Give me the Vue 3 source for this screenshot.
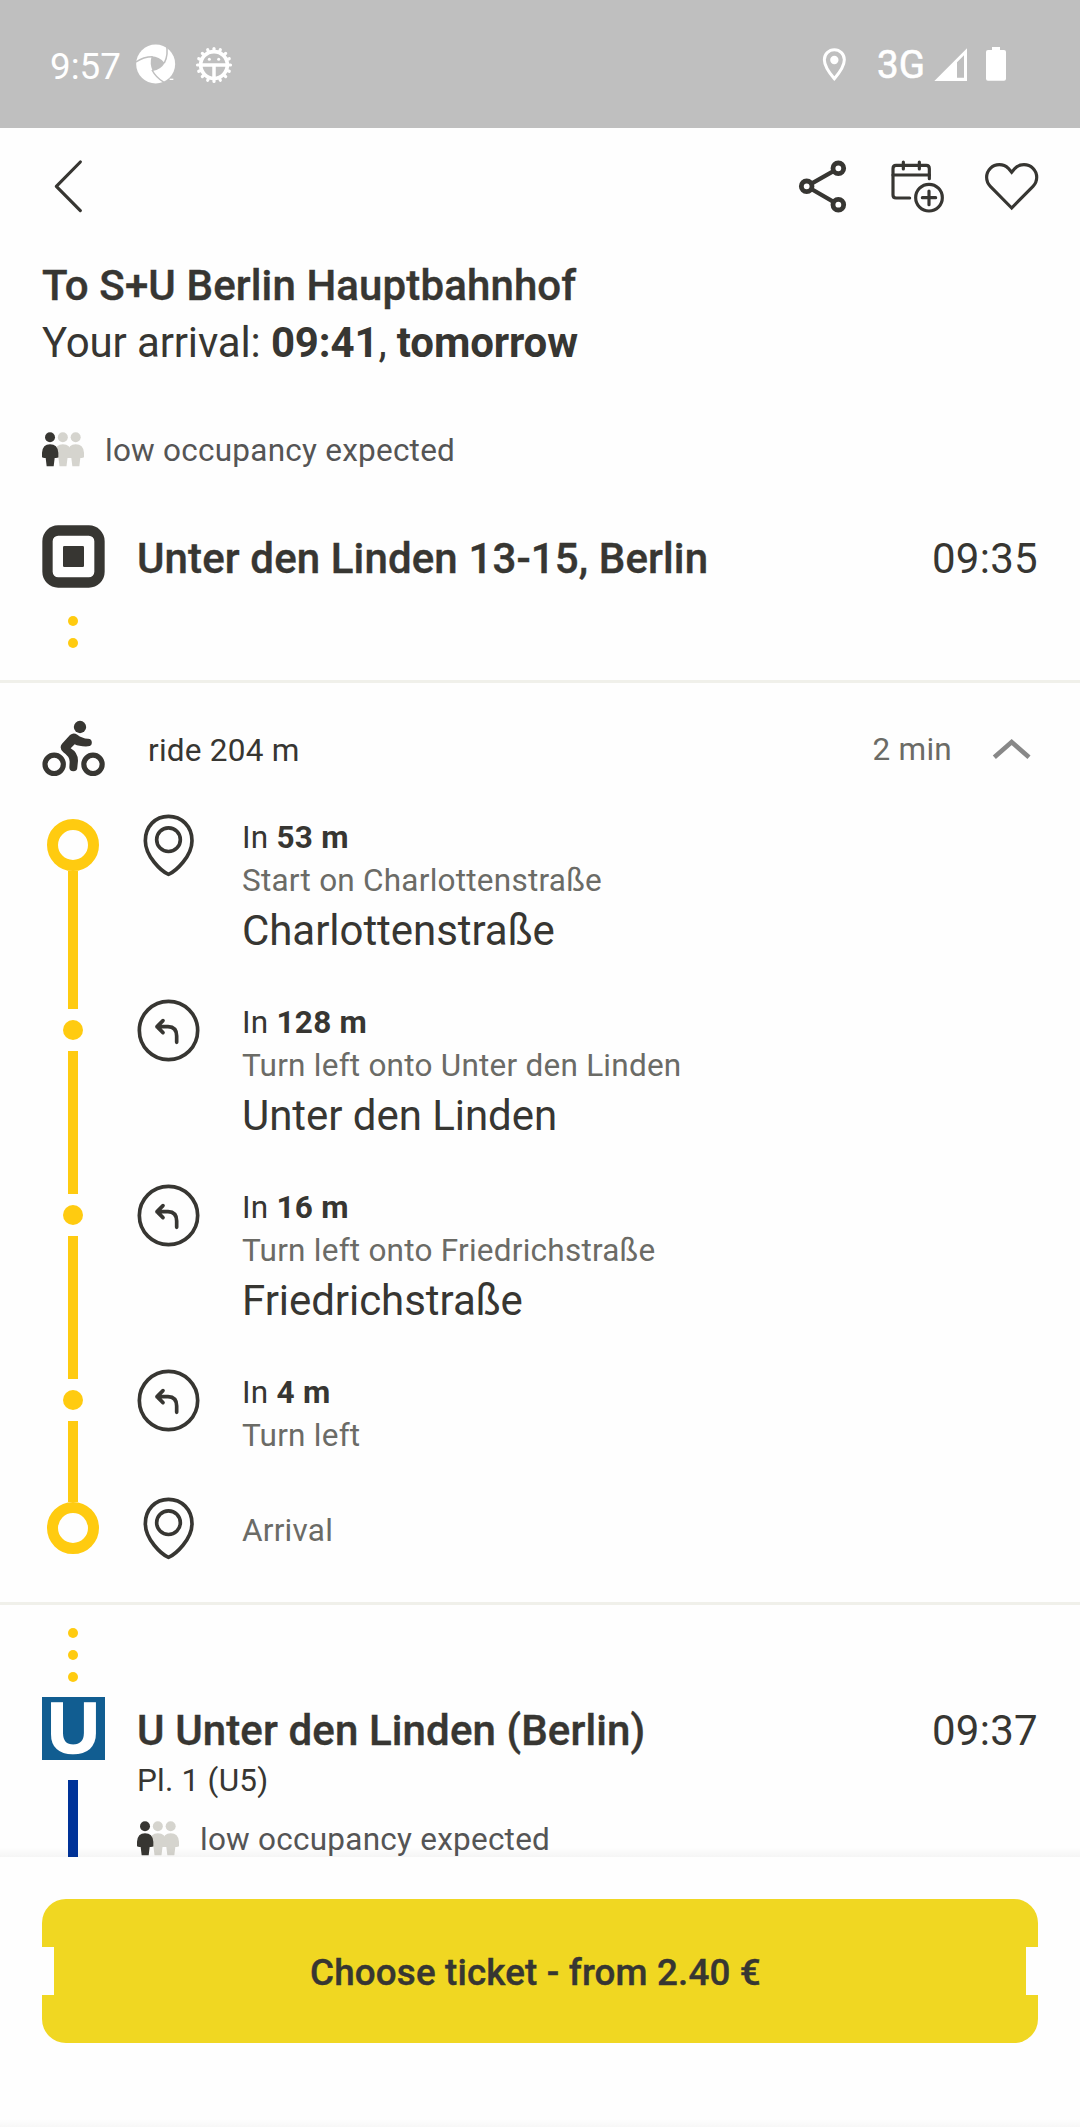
<script setup>
import { h } from 'vue'

const steps = [
  { kind: 'start', distance: '53 m', hint: 'Start on Charlottenstraße', street: 'Charlottenstraße' },
  { kind: 'turn', distance: '128 m', hint: 'Turn left onto Unter den Linden', street: 'Unter den Linden' },
  { kind: 'turn', distance: '16 m', hint: 'Turn left onto Friedrichstraße', street: 'Friedrichstraße' },
  { kind: 'turn last', distance: '4 m', hint: 'Turn left' },
  { kind: 'end', hint: 'Arrival' },
]

const teeth = Array.from({ length: 16 }, (_, i) => i * 22.5)

// Three standing figures, the first one highlighted for low occupancy
const figure = (x, fill) =>
  h('g', { fill, transform: `translate(${x} 0)` }, [
    h('circle', { cx: 24, cy: 16, r: 15 }),
    h('path', { d: 'M0 76V62Q2 37 24 37Q47 37 49 62V76Q45 79 38 78L35 103H14L11 78Q4 79 0 76Z' }),
  ])
const Occupancy = () =>
  h('svg', { viewBox: '0 0 126 104', width: 42, height: 34.67 }, [
    figure(77, '#d5d4ce'),
    figure(38.5, '#d5d4ce'),
    figure(0, '#373632'),
  ])
</script>

<template>
  <div class="screen">
    <header class="status">
      <span class="clock">9:57</span>
      <svg class="aperture" viewBox="405 133 126 126" width="42" height="42">
        <circle cx="467" cy="196" r="58.5" fill="#fff" />
        <g fill="none" stroke="#bfbfbf" stroke-width="4.5">
          <path d="M493 193Q506 168 499 137" />
          <path d="M458 174Q430 174 408 190" />
          <path d="M456 214Q468 237 492 251" />
        </g>
        <path d="M455 173Q477 173 494 193Q483 213 458 217Q448 196 455 173Z" fill="#bfbfbf" />
        <path d="M509 242h11" stroke="#fff" stroke-width="4" />
      </svg>
      <svg class="gear" viewBox="582 135 120 120" width="40" height="40">
        <g stroke="#fff" stroke-width="9.5" stroke-linecap="round">
          <path v-for="a in teeth" :key="a" d="M642 153V145.500" :transform="`rotate(${a} 642 195)`" />
        </g>
        <circle cx="642" cy="195" r="40" fill="none" stroke="#fff" stroke-width="11" />
        <path d="M602 195H682M642 195V235" stroke="#fff" stroke-width="10.500" />
        <circle cx="628" cy="178" r="4.500" fill="#fff" />
        <circle cx="656" cy="178" r="4.500" fill="#fff" />
      </svg>
      <svg class="gps" viewBox="186 140 75 105" width="25" height="35">
        <path d="M223 235Q193 200 193 178A30 30 0 0 1 253 178Q253 200 223 235Z" fill="none" stroke="#fff" stroke-width="9" />
        <circle cx="223" cy="179" r="12.5" fill="#fff" />
      </svg>
      <span class="net">3G</span>
      <svg class="signal" viewBox="522 141 99 99" width="33" height="33">
        <path d="M523 240L621 142V240ZM591 184V230H612V163Z" fill="#fff" fill-rule="evenodd" />
      </svg>
      <svg class="battery" viewBox="678 141 60 102" width="20" height="34">
        <path d="M696 141H720V150H732Q738 150 738 156V236Q738 242 732 242H684Q678 242 678 236V156Q678 150 684 150H696Z" fill="#fff" />
      </svg>
    </header>

    <nav class="toolbar">
      <svg class="back" viewBox="156 474 96 171" width="32" height="57">
        <path d="M241 486L169 559L241 632" />
      </svg>
      <svg class="share" viewBox="114 474 150 171" width="50" height="57">
        <path d="M235 505L140 559L235 614" stroke-width="12.5" />
        <g fill="#fff" stroke-width="14.5">
          <circle cx="235" cy="505" r="16" />
          <circle cx="140" cy="559" r="16" />
          <circle cx="235" cy="614" r="16" />
        </g>
      </svg>
      <svg class="calendar" viewBox="390 474 165 171" width="55" height="57">
        <path d="M449 594H408Q399 594 399 585V506Q399 496 408 496H499Q508 496 508 506V536" />
        <path d="M399 525H508M430 486V507M478 486V507" />
        <circle cx="507" cy="593" r="40" />
        <path d="M487 593H527M507 573V614" />
      </svg>
      <svg class="heart" viewBox="672 474 165 171" width="55" height="57">
        <path d="M755 624L691 559A38 38 0 0 1 745 505L755 517L765 505A38 38 0 0 1 819 559Z" />
      </svg>
    </nav>

    <main class="content">
      <section class="summary">
        <p class="line medium">To S+U Berlin Hauptbahnhof</p>
        <p class="line arrival">Your arrival: <b>09:41</b>, <b>tomorrow</b></p>
        <div class="occupancy"><Occupancy /><span>low occupancy expected</span></div>
      </section>

      <section class="origin">
        <div class="stop">
          <svg class="place" viewBox="126 135 189 189" width="63" height="63">
            <rect x="142.500" y="151.500" width="156" height="156" rx="32" fill="none" stroke="#373632" stroke-width="31" />
            <rect x="189" y="198" width="63" height="63" rx="4" fill="#373632" />
          </svg>
          <h2 class="medium">Unter den Linden 13-15, Berlin</h2>
          <time>09:35</time>
        </div>
        <div class="dots"><i></i><i></i></div>
      </section>

      <section class="leg">
        <div class="leg-head">
          <svg class="bike" viewBox="126 720 189 171" width="63" height="57">
            <g fill="none" stroke="#373632" stroke-width="15.500">
              <circle cx="162.500" cy="853" r="27.500" />
              <circle cx="279" cy="853" r="27.500" />
            </g>
            <g fill="#373632">
              <circle cx="240" cy="741" r="18.500" />
              <path d="M210 765Q220 756 232 764Q246 775 264 776A11.500 11.500 0 0 1 264 799Q238 800 224 793L212 805Q234 818 234 842L232 862A12 12 0 0 1 208 862L209 845Q209 830 190 817Q176 804 186 791Z" />
            </g>
          </svg>
          <span class="ride">ride 204 m</span>
          <span class="duration">2 min</span>
          <svg class="chevron" viewBox="876 712 120 66" width="40" height="22">
            <path d="M883 770L935 724L987 770" fill="none" stroke="#888" stroke-width="14" />
          </svg>
        </div>

        <div v-for="(s, i) in steps" :key="i" class="step" :class="s.kind">
          <div class="rail">
            <template v-if="s.kind === 'start'">
              <i class="ring"></i><i class="bar"></i>
            </template>
            <template v-else-if="s.kind === 'end'">
              <i class="stub"></i><i class="ring"></i>
            </template>
            <template v-else>
              <i class="stub"></i><i class="dot"></i><i class="bar"></i>
            </template>
          </div>
          <div class="sign">
            <svg v-if="s.distance && s.kind !== 'start'" viewBox="411 627 189 189" width="63" height="63">
              <g fill="none" stroke="#373632" stroke-width="11" stroke-linecap="round" stroke-linejoin="round">
                <circle cx="505.500" cy="721.500" r="87.500" />
                <path d="M471 710H504Q530 711 530 738V757M489 692L471 710L489 728" />
              </g>
            </svg>
            <svg v-else viewBox="411 72 189 189" width="63" height="63">
              <g fill="none" stroke="#373632" stroke-width="11" stroke-linejoin="round">
                <path d="M505.500 253C484 244 436 199 436 152C436 109 466 79 505.500 79C545 79 576 109 576 152C576 199 527 244 505.500 253Z" />
                <circle cx="505.500" cy="149" r="35.500" />
              </g>
            </svg>
          </div>
          <div class="text">
            <p v-if="s.distance" class="distance">In <b>{{ s.distance }}</b></p>
            <p class="hint">{{ s.hint }}</p>
            <p v-if="s.street" class="street">{{ s.street }}</p>
          </div>
        </div>
      </section>

      <section class="transit">
        <div class="dots"><i></i><i></i><i></i></div>
        <div class="stop">
          <div class="ubahn">U</div>
          <h2 class="medium">U Unter den Linden (Berlin)</h2>
          <time>09:37</time>
        </div>
        <div class="platform">
          <div class="rail"><i class="bar"></i></div>
          <div>
            <p class="pl">Pl. 1 (U5)</p>
            <div class="occupancy"><Occupancy /><span>low occupancy expected</span></div>
          </div>
        </div>
      </section>
    </main>

    <footer class="buy">
      <button class="ticket medium">Choose ticket - from 2.40 €</button>
    </footer>
  </div>
</template>

<style>
body { margin: 0; background: #fff; }
</style>

<style scoped>
.screen {
  width: 1080px;
  height: 2127px;
  overflow: hidden;
  display: flex;
  flex-direction: column;
  background: #fefefe;
  color: #373632;
  font-family: Roboto, "Liberation Sans", sans-serif;
  font-size: 31.5px;
  letter-spacing: 0.24px;
}
p, h2 { margin: 0; }
svg { display: block; flex: none; }
i { display: block; }
b { font-weight: 700; }

.status {
  flex: none;
  height: 128px;
  box-sizing: border-box;
  padding: 0 74px 0 50px;
  display: flex;
  align-items: center;
  background: #bfbfbf;
  color: #fff;
  font-size: 36.75px;
  letter-spacing: 0;
}
.clock { width: 85px; line-height: 40px; margin-top: 5px; }
.gear { margin-left: 17px; margin-top: 2px; }
.gps { margin-left: auto; }
.net {
  width: 57px;
  margin-left: 30px;
  margin-top: 1px;
  line-height: 40px;
  font-size: 38.5px;
  -webkit-text-stroke: 0.6px #fff;
}
.signal { margin-right: 19px; }

.toolbar {
  flex: none;
  height: 129px;
  box-sizing: border-box;
  padding: 30px 41px 0 52px;
  display: flex;
  align-items: flex-start;
}
.toolbar svg {
  fill: none;
  stroke: #373632;
  stroke-width: 9.5;
  stroke-linecap: round;
}
.back { margin-right: auto; stroke-linejoin: round; }
.calendar { margin-left: 42px; }
.heart { margin-left: 39px; }

.content {
  flex: none;
  height: 1600px;
  overflow: hidden;
  position: relative;
}
.content::after {
  content: "";
  position: absolute;
  inset: auto 0 0;
  height: 10px;
  background: linear-gradient(transparent, rgba(0, 0, 0, 0.035));
}
.medium {
  font-weight: 500;
  letter-spacing: 0.12px;
  -webkit-text-stroke: 0.4px #373632;
}
.summary { padding: 0 42px; }
.line { font-size: 42px; line-height: 57px; white-space: nowrap; }
.arrival { letter-spacing: -0.14px; }
.occupancy {
  display: flex;
  gap: 21px;
  height: 42px;
  line-height: 42px;
  align-items: center;
  color: #555;
}
.occupancy svg { margin-top: -1px; }
.occupancy span { padding-top: 1px; }
.summary .occupancy { margin-top: 58px; }

.origin { padding: 54px 42px 0; height: 209px; box-sizing: border-box; }
.stop { display: flex; height: 63px; }
.stop h2, .stop time { font-size: 42px; line-height: 67px; white-space: nowrap; }
.stop h2 { margin-left: 32px; flex: 1; }
.stop time { letter-spacing: 0.3px; }
.dots { width: 62px; display: flex; flex-direction: column; align-items: center; gap: 12px; }
.dots i { width: 10px; height: 10px; border-radius: 50%; background: #ffcb10; }
.origin .dots { padding-top: 28px; }

.leg { border: solid #f0f0ea; border-width: 3px 0; padding: 0 42px; }
.leg-head { height: 133px; display: flex; align-items: center; }
.bike { margin-top: -2px; }
.ride { margin-left: 43px; margin-top: 1px; flex: 1; }
.duration { color: #6b6b66; }
.chevron { margin: -2px 6px 0 40px; }

.step { display: flex; height: 185px; }
.step.last { height: 128px; }
.step.end { height: 103px; }
.rail { width: 62px; display: flex; flex-direction: column; align-items: center; }
.bar { flex: 1; width: 10px; background: #ffcb10; }
.stub { height: 8px; width: 10px; background: #ffcb10; }
.ring {
  flex: none;
  box-sizing: border-box;
  width: 52px;
  height: 52px;
  border: 11px solid #ffcb10;
  border-radius: 50%;
  margin-top: 3px;
}
.end .stub { height: 3px; }
.end .ring { margin-top: 0; }
.dot { width: 20px; height: 20px; flex: none; border-radius: 50%; background: #ffcb10; margin: 11px 0; }
.sign { margin: -2px 42px 0 33px; }
.text { white-space: nowrap; }
.distance, .hint { line-height: 43px; }
.hint { color: #6b6b66; }
.street { font-size: 42px; line-height: 57px; letter-spacing: -0.05px; }
.end .hint { padding-top: 10px; }

.transit { padding: 23px 42px 0; }
.transit .dots { margin-bottom: 15px; }
.ubahn {
  width: 63px;
  height: 63px;
  background: #115d91;
  color: #fff;
  font: 700 72px/62px "Liberation Sans", Arial, sans-serif;
  letter-spacing: 0;
  text-align: center;
  -webkit-text-stroke: 1.6px #fff;
}
.platform { display: flex; }
.platform .rail { padding-top: 20px; margin-right: 33px; }
.platform .bar { background: #039; }
.pl { line-height: 43px; margin-top: -1px; }
.platform .occupancy { margin-top: 16px; }

.buy {
  flex: 1;
  padding: 42px 42px 0;
  background: linear-gradient(#fefefe 262px, #f7f7f7 270px);
}
.ticket {
  display: block;
  width: 996px;
  height: 144px;
  border: 0;
  border-radius: 24px;
  padding: 3px 9px 0 0;
  background: #f0d722;
  color: #373632;
  font: 500 36.75px Roboto, sans-serif;
  letter-spacing: 0.16px;
  clip-path: polygon(0 0, 100% 0, 100% 48px, 984px 48px, 984px 96px, 100% 96px, 100% 100%, 0 100%, 0 96px, 12px 96px, 12px 48px, 0 48px);
}
</style>
